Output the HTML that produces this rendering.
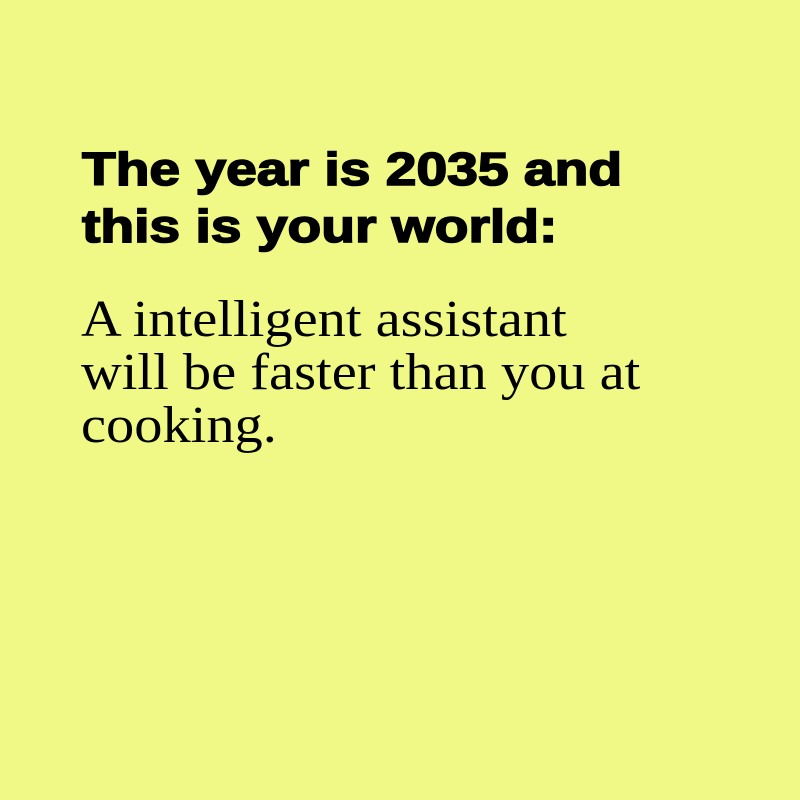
<html><head><style>
body{margin:0;width:800px;height:800px;background:#f0f986;overflow:hidden}
.h{position:absolute;left:82px;top:0;font:bold 46px/57px "Liberation Sans",sans-serif;-webkit-text-stroke:1.6px #000;color:#000;margin:0;transform:scaleX(1.2);transform-origin:0 0;white-space:nowrap}
.b{position:absolute;left:81px;top:0;font:52px/53px "Liberation Serif",serif;color:#000;margin:0;transform:scaleX(1.085);transform-origin:0 0;white-space:nowrap}
</style></head><body>
<div class="h" style="top:141px">The year is 2035 and<br>this is your world:</div>
<div class="b" style="top:293px">A intelligent assistant<br>will be faster than you at<br>cooking.</div>
</body></html>
